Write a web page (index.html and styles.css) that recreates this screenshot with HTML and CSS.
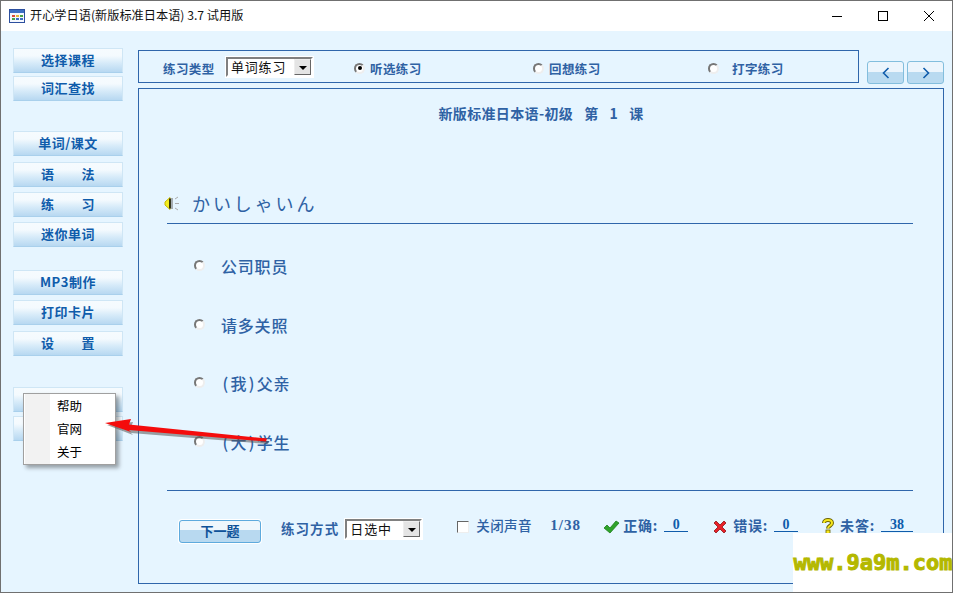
FILE: index.html
```html
<!DOCTYPE html>
<html lang="zh">
<head>
<meta charset="utf-8">
<title>开心学日语</title>
<link rel="stylesheet" href="styles.css">
</head>
<body>
<div class="window">
  <header class="titlebar">
    <svg class="app-icon" width="16" height="14" viewBox="0 0 16 14"><rect x="0.5" y="0.5" width="15" height="13" fill="#f4f8ff" stroke="#2c4f9e"/><rect x="1" y="1" width="14" height="3" fill="#3c6fc4"/><rect x="3" y="6" width="3" height="2" fill="#d94b3a"/><rect x="7" y="6" width="3" height="2" fill="#e2b93a"/><rect x="11" y="6" width="3" height="2" fill="#4aa34a"/><rect x="3" y="9" width="3" height="2" fill="#4aa34a"/><rect x="7" y="9" width="3" height="2" fill="#3c6fc4"/><rect x="11" y="9" width="3" height="2" fill="#3c6fc4"/></svg>
    <span class="app-title">开心学日语(新版标准日本语) 3.7 试用版</span>
    <div class="win-controls">
      <span class="win-btn"><svg width="10" height="10" viewBox="0 0 10 10"><path d="M0 5.5H10" stroke="#000"/></svg></span>
      <span class="win-btn"><svg width="10" height="10" viewBox="0 0 10 10"><rect x="0.5" y="0.5" width="9" height="9" fill="none" stroke="#000"/></svg></span>
      <span class="win-btn"><svg width="10" height="10" viewBox="0 0 10 10"><path d="M0 0L10 10M10 0L0 10" stroke="#000"/></svg></span>
    </div>
  </header>

  <div class="content">
    <nav class="sidebar">
      <div class="side-group first">
        <button class="side-btn">选择课程</button>
        <button class="side-btn">词汇查找</button>
      </div>
      <div class="side-group lesson">
        <button class="side-btn">单词/课文</button>
        <button class="side-btn step">语　　法</button>
        <button class="side-btn">练　　习</button>
        <button class="side-btn">迷你单词</button>
      </div>
      <div class="side-group tools">
        <button class="side-btn">MP3制作</button>
        <button class="side-btn">打印卡片</button>
        <button class="side-btn step">设　　置</button>
      </div>
      <div class="side-group help">
        <button class="side-btn" aria-label="帮助"></button>
        <button class="side-btn" aria-label="退出"></button>
      </div>
    </nav>

    <main class="workspace">
      <div class="top-row">
        <section class="type-panel">
          <span class="label type-label">练习类型</span>
          <div class="select type-select"><span class="select-text">单词练习</span><span class="select-arrow"></span></div>
          <span class="radio checked r1"></span><span class="label r-text">听选练习</span>
          <span class="radio r2"></span><span class="label r-text">回想练习</span>
          <span class="radio r3"></span><span class="label r-text far">打字练习</span>
        </section>
        <div class="nav-btns">
          <button class="nav-btn"><svg width="8" height="12" viewBox="0 0 8 12"><path d="M6.5 1L1.5 6L6.5 11" fill="none" stroke="#0f5cab" stroke-width="1.6"/></svg></button>
          <button class="nav-btn"><svg width="8" height="12" viewBox="0 0 8 12"><path d="M1.5 1L6.5 6L1.5 11" fill="none" stroke="#0f5cab" stroke-width="1.6"/></svg></button>
        </div>
      </div>

      <section class="panel">
        <h1 class="lesson-title">新版标准日本语-初级 第 1 课</h1>
        <div class="word-row">
          <svg class="speaker" width="17" height="15" viewBox="0 0 17 15"><path d="M1 6L6 1.5V13.5L1 9Z" fill="#f4ee20" stroke="#c9b800"/><path d="M6 2.500V12.500" stroke="#000" stroke-width="1.500"/><path d="M8 2V13" stroke="#666"/><path d="M11 3L14 1M11 7.500H15M11 12L14 14" stroke="#aaa"/></svg>
          <span class="word">かいしゃいん</span>
        </div>
        <ul class="options">
          <li class="option"><span class="radio"></span><span class="opt-text">公司职员</span></li>
          <li class="option"><span class="radio"></span><span class="opt-text">请多关照</span></li>
          <li class="option"><span class="radio"></span><span class="opt-text"><span class="paren">(</span>我<span class="paren">)</span>父亲</span></li>
          <li class="option"><span class="radio"></span><span class="opt-text"><span class="paren">(</span>大<span class="paren">)</span>学生</span></li>
        </ul>
        <div class="bottom-row">
          <button class="next-btn">下一题</button>
          <span class="label mode-label">练习方式</span>
          <div class="select mode-select"><span class="select-text">日选中</span><span class="select-arrow"></span></div>
          <span class="checkbox"></span>
          <span class="label small sound">关闭声音</span>
          <span class="label small count">1/38</span>
          <svg class="stat-icon ok" width="17" height="14" viewBox="0 0 17 14"><path d="M1 8L4 5L7 8L13 1L16 3L7 13Z" fill="#2fa32a" stroke="#1c7d1c" stroke-width="0.8"/></svg>
          <span class="label stat">正确:</span><span class="stat-val v1">0</span>
          <svg class="stat-icon bad" width="14" height="14" viewBox="0 0 14 14"><path d="M1 3L3 1L7 5L11 1L13 3L9 7L13 11L11 13L7 9L3 13L1 11L5 7Z" fill="#e8202a" stroke="#8e1414" stroke-width="0.8"/></svg>
          <span class="label stat">错误:</span><span class="stat-val v2">0</span>
          <svg class="stat-icon ask" width="12" height="16" viewBox="0 0 12 16"><path d="M2 5C2 1 10 1 10 5C10 8 6 7.500 6 10.500" fill="none" stroke="#6b6200" stroke-width="4"/><path d="M2 5C2 1 10 1 10 5C10 8 6 7.500 6 10.500" fill="none" stroke="#f6e71e" stroke-width="2"/><rect x="4" y="12" width="4" height="4" fill="#f6e71e" stroke="#6b6200" stroke-width="0.8"/></svg>
          <span class="label stat">未答:</span><span class="stat-val v3">38</span>
        </div>
      </section>
    </main>
  </div>

  <ul class="context-menu">
    <li class="menu-item">帮助</li>
    <li class="menu-item">官网</li>
    <li class="menu-item">关于</li>
  </ul>

  <svg class="annot-arrow" width="180" height="30" viewBox="0 0 180 30">
    <path d="M6 13L32 10L30 15L168 29L167 32L30 21L32 23Z" fill="#555" opacity="0.55"/>
    <path d="M4 11L30 7L28 12.500L166 26.500L165 29.500L28 18L30 20Z" fill="#f40c0c"/>
  </svg>

  <div class="watermark">www.9a9m.com</div>
</div>
</body>
</html>
```
FILE: styles.css
```css
* { box-sizing: border-box; }
html, body { margin: 0; padding: 0; }
body { width: 953px; height: 593px; overflow: hidden; font-family: "Noto Sans CJK SC", "Liberation Sans", sans-serif; }
ul { list-style: none; margin: 0; padding: 0; }
button { font-family: inherit; padding: 0; cursor: default; }

.window { position: relative; width: 953px; height: 593px; border: 1px solid #707070; background: #e6f5ff; display: flex; flex-direction: column; overflow: hidden; }

.titlebar { height: 30px; flex: none; background: #fff; display: flex; align-items: center; padding-left: 8px; }
.app-icon { flex: none; margin-top: -1px; }
.app-title { margin-left: 5px; font-size: 12.200px; color: #111; line-height: 29px; height: 30px; }
.win-controls { margin-left: auto; display: flex; }
.win-btn { width: 46px; height: 30px; display: flex; align-items: center; justify-content: center; }

.content { flex: 1; display: flex; min-height: 0; }

.sidebar { width: 137px; flex: none; padding-left: 12px; }
.side-group { display: flex; flex-direction: column; gap: 5px; }
.side-group.first { margin-top: 17px; gap: 3px; }
.side-group.lesson { margin-top: 30px; }
.side-group.tools { margin-top: 23px; }
.side-group.help { margin-top: 31px; gap: 4px; }
.side-btn { width: 110px; height: 25px; flex: none; border: 1px solid #cfe6f5; border-bottom-color: #a9d0ec; background: linear-gradient(#f6fbfe 0%, #f4fafe 30%, #d7ebf9 60%, #b7d8f1 100%); color: #0f5cab; font-weight: 700; font-size: 13px; letter-spacing: 0.500px; line-height: 21px; text-align: center; padding-bottom: 2px; }
.side-btn.step { margin-top: 1px; }

.workspace { flex: 1; min-width: 0; }
.top-row { display: flex; margin-top: 19px; height: 34px; }
.type-panel { width: 721px; height: 33px; border: 1px solid #2f66ab; display: flex; align-items: center; padding: 3px 0 0 24px; }
.label { color: #2f62a4; font-weight: 700; font-size: 12.500px; white-space: nowrap; letter-spacing: 0.400px; }
.type-label { width: 63px; }
.select { display: flex; align-items: stretch; border: 2px solid; border-color: #808080 #fff #fff #808080; outline: 1px solid #fff; background: #fff; height: 20px; }
.type-select { width: 87px; margin-top: -3px; }
.mode-select { width: 77px; margin-left: 6px; margin-top: -1px; }
.select-text { flex: 1; font-size: 13px; color: #111; line-height: 16px; padding-left: 3px; letter-spacing: 0.800px; white-space: nowrap; }
.select-arrow { width: 17px; background: #e4e4e4; border: 1px solid; border-color: #eee #666 #666 #eee; position: relative; }
.select-arrow::after { content: ""; position: absolute; left: 4px; top: 6px; border: 4px solid transparent; border-top: 4px solid #000; border-bottom: 0; }
.radio { display: block; flex: none; width: 11px; height: 11px; border-radius: 50%; background: #fff; border: 2px solid; border-color: #777 #eee #eee #777; position: relative; }
.radio.checked::after { content: ""; position: absolute; left: 1.500px; top: 1.500px; width: 4px; height: 4px; border-radius: 50%; background: #000; }
.r1 { margin-left: 41px; }
.r2 { margin-left: 112px; }
.r3 { margin-left: 108px; }
.r-text { margin-left: 5px; width: 51px; }
.r-text.far { margin-left: 13px; }

.nav-btns { display: flex; gap: 3px; margin-left: 8px; margin-top: 11px; }
.nav-btn { width: 37px; height: 23px; border: 1px solid #83bedd; border-radius: 3px; background: linear-gradient(#ecf5fc 50%, #b9daf0 50%); display: flex; align-items: center; justify-content: center; }

.panel { width: 806px; height: 496px; margin-top: 4px; border: 1px solid #2f66ab; }
.lesson-title { margin: 0; height: 50px; line-height: 48px; text-align: center; font-size: 14px; font-weight: 700; color: #2f62a4; letter-spacing: 0.350px; word-spacing: 7.500px; }
.word-row { margin: 44px 30px 0 25px; height: 41px; border-bottom: 1px solid #2f66ab; display: flex; align-items: center; position: relative; }
.word-row::before { content: ""; position: absolute; left: 0; bottom: -1px; width: 3px; height: 1px; background: #e6f5ff; }
.speaker { flex: none; }
.word { margin-left: 11px; font-size: 18px; letter-spacing: 2.900px; color: #2f62a4; line-height: 26px; }
.options { margin-top: 12px; padding-left: 55px; }
.option { height: 58.700px; display: flex; align-items: center; }
.opt-text { margin-left: 16px; font-size: 16px; letter-spacing: 0.800px; color: #2f62a4; font-weight: 500; margin-top: 1px; }
.paren { padding: 0 1.500px; }
.bottom-row { margin: 19px 30px 0 28px; border-top: 1px solid #2f66ab; padding-top: 29px; display: flex; align-items: flex-start; height: 62px; }
.next-btn { width: 82px; height: 23px; margin-left: 12px; border: 1px solid #5eaadd; border-radius: 3px; background: linear-gradient(#eff7fc 45%, #b8d9f0 45%); color: #0f5298; font-size: 13px; font-weight: 700; line-height: 19px; padding-bottom: 2px; box-shadow: 0 0 0 1px #fff; }
.mode-label { margin-left: 20px; font-size: 13.500px; letter-spacing: 1.100px; line-height: 20px; margin-top: -2px; }
.checkbox { width: 12px; height: 12px; margin-left: 35px; margin-top: 1px; background: #fff; border: 1px solid; border-color: #666 #eee #eee #666; flex: none; }
.small { line-height: 10px; font-size: 13.500px; font-weight: 500; }
.sound { margin-left: 7px; width: 56px; }
.count { margin-left: 18px; width: 31px; font-family: "Liberation Serif", serif; font-weight: 700; font-size: 15px; letter-spacing: 1px; }
.stat-icon { flex: none; }
.ok { margin-left: 22px; }
.bad { margin-left: 25px; }
.ask { margin-left: 24px; margin-top: -2px; }
.stat { margin-left: 3px; font-size: 14px; line-height: 10px; width: 37px; letter-spacing: 0.800px; }
.bad + .stat { margin-left: 6px; }
.ask + .stat { margin-left: 6px; }
.stat-val { margin-left: 4px; height: 12px; border-bottom: 1px solid #0f5cab; text-align: center; color: #0f5cab; font-family: "Liberation Serif", serif; font-weight: 700; font-size: 14px; line-height: 10px; }
.v1, .v2 { width: 24px; }
.v3 { width: 32px; }

.context-menu { position: absolute; left: 22px; top: 392px; width: 93px; height: 72px; background: linear-gradient(90deg, #fff 1px, #f2f2f2 1px, #f2f2f2 26px, #fff 26px); border: 1px solid #a0a0a0; box-shadow: 3px 3px 4px rgba(0, 0, 0, 0.35); }
.menu-item { height: 23px; line-height: 23px; padding-left: 33px; font-size: 12.500px; color: #000; }

.annot-arrow { position: absolute; left: 100px; top: 411px; overflow: visible; }

.watermark { position: absolute; right: -1px; bottom: -1px; width: 160px; height: 60px; padding-left: 0.500px; background: #fff; color: #b4b800; font-family: "DejaVu Sans Mono", monospace; font-weight: 700; font-size: 22px; line-height: 60px; white-space: nowrap; -webkit-text-stroke: 1px #b4b800; }
```
